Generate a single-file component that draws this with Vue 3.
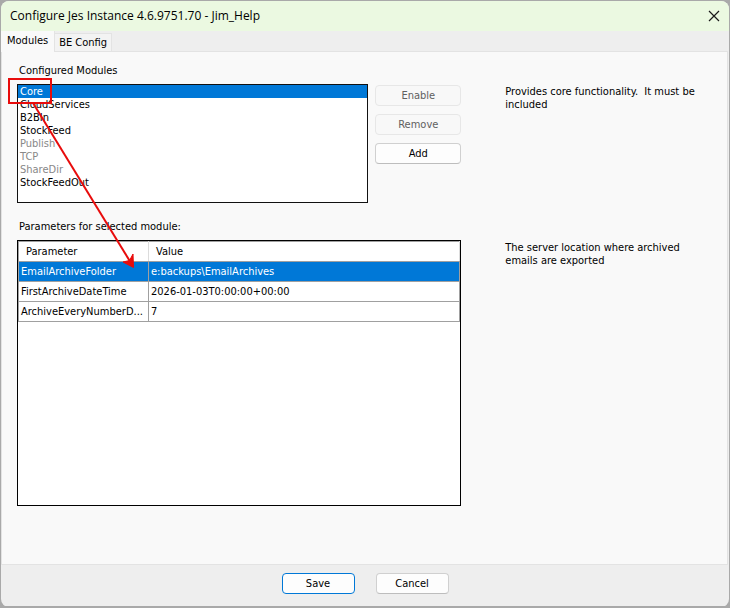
<script setup>
import { ref } from 'vue'

const modules = [
  { name: 'Core', off: false },
  { name: 'CloudServices', off: false },
  { name: 'B2BIn', off: false },
  { name: 'StockFeed', off: false },
  { name: 'Publish', off: true },
  { name: 'TCP', off: true },
  { name: 'ShareDir', off: true },
  { name: 'StockFeedOut', off: false }
]
const parameters = [
  { name: 'EmailArchiveFolder', value: 'e:backups\\EmailArchives' },
  { name: 'FirstArchiveDateTime', value: '2026-01-03T0:00:00+00:00' },
  { name: 'ArchiveEveryNumberD...', value: '7' }
]
const selectedModule = ref('Core')
const selectedRow = ref(0)
</script>

<template>
  <main class="window">
    <header class="titlebar">
      <h1 class="title">Configure Jes Instance 4.6.9751.70 - Jim_Help</h1>
      <button class="close" type="button" aria-label="Close">
        <svg width="12" height="12" viewBox="0 0 12 12" aria-hidden="true">
          <path d="M1 1L11 11M11 1L1 11" fill="none" stroke="#1a1a1a" stroke-width="1.2" />
        </svg>
      </button>
    </header>

    <div class="tabs" role="tablist">
      <button class="tab active" type="button" role="tab" aria-selected="true">Modules</button>
      <button class="tab" type="button" role="tab" aria-selected="false">BE Config</button>
    </div>

    <section class="page" role="tabpanel">
      <label class="caption" for="modules">Configured Modules</label>
      <div class="split">
        <div class="chooser">
          <select id="modules" v-model="selectedModule" class="modules" size="9">
            <option v-for="m in modules" :key="m.name" :value="m.name" :class="{ off: m.off }">{{ m.name }}</option>
          </select>
          <div class="actions">
            <button class="btn" type="button" disabled>Enable</button>
            <button class="btn" type="button" disabled>Remove</button>
            <button class="btn" type="button">Add</button>
          </div>
        </div>
        <p class="hint">Provides core functionality.&nbsp; It must be included</p>
      </div>

      <h2 id="params" class="caption second">Parameters for selected module:</h2>
      <div class="split grow">
        <div class="grid">
          <table aria-labelledby="params">
            <colgroup><col class="name-col"><col></colgroup>
            <thead>
              <tr><th scope="col">Parameter</th><th scope="col">Value</th></tr>
            </thead>
            <tbody>
              <tr v-for="(p, i) in parameters" :key="p.name" :class="{ selected: i === selectedRow }" @click="selectedRow = i">
                <td>{{ p.name }}</td><td>{{ p.value }}</td>
              </tr>
            </tbody>
          </table>
        </div>
        <p class="hint">The server location where archived emails are exported</p>
      </div>
    </section>

    <footer class="footer">
      <button class="btn primary" type="button">Save</button>
      <button class="btn" type="button">Cancel</button>
    </footer>

    <svg class="callout" width="140" height="200" viewBox="0 0 140 200" aria-hidden="true">
      <g fill="none" stroke="#e80c0c" stroke-width="2">
        <rect x="1" y="1" width="42" height="24" />
        <path d="M25 25L123 185" />
      </g>
      <path d="M125.500 189.500L115 184L121.500 182.500L125 176Z" fill="#e80c0c" stroke="#e80c0c" />
    </svg>
  </main>
</template>

<style>
body {
  background: #a9a9a9;
}
</style>

<style scoped>
.window {
  position: relative;
  top: 1px;
  box-sizing: border-box;
  display: flex;
  flex-direction: column;
  min-height: calc(100vh - 2px);
  margin: 0 1px;
  border-radius: 8px;
  overflow: hidden;
  background: #eeeeee;
  color: #000;
  font: 11px/13px "DejaVu Sans Condensed", "Noto Sans", sans-serif;
}
button,
select {
  font: inherit;
  color: inherit;
}
.titlebar {
  display: flex;
  align-items: center;
  justify-content: space-between;
  height: 30px;
  padding: 0 9px;
  background: #ebf9e1;
}
.title {
  margin: 0;
  font: 12px/16px "Open Sans", "Noto Sans", sans-serif;
}
.close {
  display: flex;
  padding: 0;
  border: 0;
  background: none;
}
.tabs {
  display: flex;
  align-items: flex-end;
  height: 20px;
}
.tab {
  height: 18px;
  padding: 0 4px;
  border: 1px solid #e3e3e3;
  border-bottom: 0;
  border-left: 0;
  background: #f3f3f3;
}
.tab.active {
  z-index: 1;
  height: 21px;
  margin-bottom: -1px;
  padding: 0 6px 3px;
  border: 0;
  border-right: 1px solid #e3e3e3;
  background: #f9f9f9;
}
.page {
  flex: 1;
  display: flex;
  flex-direction: column;
  margin-right: 1px;
  padding: 12px 20px 58px 15px;
  border: 1px solid #e3e3e3;
  background: #f9f9f9;
}
.caption {
  margin: 0 0 7px 2px;
  font: inherit;
}
.second {
  margin-top: 17px;
}
.split {
  display: grid;
  grid-template-columns: 445fr 202fr;
  gap: 44px;
}
.grow {
  flex: 1;
}
.chooser {
  display: flex;
  gap: 7px;
}
.modules {
  box-sizing: border-box;
  flex: 1;
  min-width: 0;
  height: 119px;
  padding: 0;
  border: 1px solid #111;
  border-radius: 0;
  outline: 0;
  overflow: hidden;
  background: #fff;
}
.modules option {
  height: 13px;
  min-height: 13px;
  padding: 0 2px;
  line-height: 13px;
  color: #000;
}
.modules option.off {
  color: #888;
}
.modules option:checked {
  background: #0078d7 linear-gradient(#0078d7, #0078d7);
  color: #fff;
}
.actions {
  display: flex;
  flex-direction: column;
  gap: 8px;
  padding-top: 1px;
}
.btn {
  box-sizing: border-box;
  width: 86px;
  height: 21px;
  padding: 0 4px;
  border: 1px solid #d0d0d0;
  border-bottom-color: #bdbdbd;
  border-radius: 4px;
  background: #fdfdfd;
}
.btn:disabled {
  border-color: #e7e7e7;
  background: #f8f8f8;
  color: #606060;
}
.hint {
  margin: 1px 0 0;
}
.grid {
  border: 1px solid #000;
  background: #fff;
}
table {
  width: 100%;
  table-layout: fixed;
  border-collapse: collapse;
  border: 1px solid #a0a0a0;
}
.name-col {
  width: 130px;
}
th,
td {
  height: 19px;
  padding: 0 2px;
  border: 1px solid #a0a0a0;
  overflow: hidden;
  text-align: left;
  text-overflow: ellipsis;
  white-space: nowrap;
  font-weight: 400;
}
th {
  padding: 0 7px;
  border-right-color: #dcdcdc;
}
.selected td {
  background: #0078d7;
  color: #fff;
}
.footer {
  display: flex;
  justify-content: center;
  gap: 21px;
  padding: 8px 0 13px;
}
.footer .btn {
  width: 73px;
}
.footer .primary {
  border-color: #0078d7;
}
.callout {
  position: absolute;
  left: 7px;
  top: 77px;
  pointer-events: none;
}
</style>
